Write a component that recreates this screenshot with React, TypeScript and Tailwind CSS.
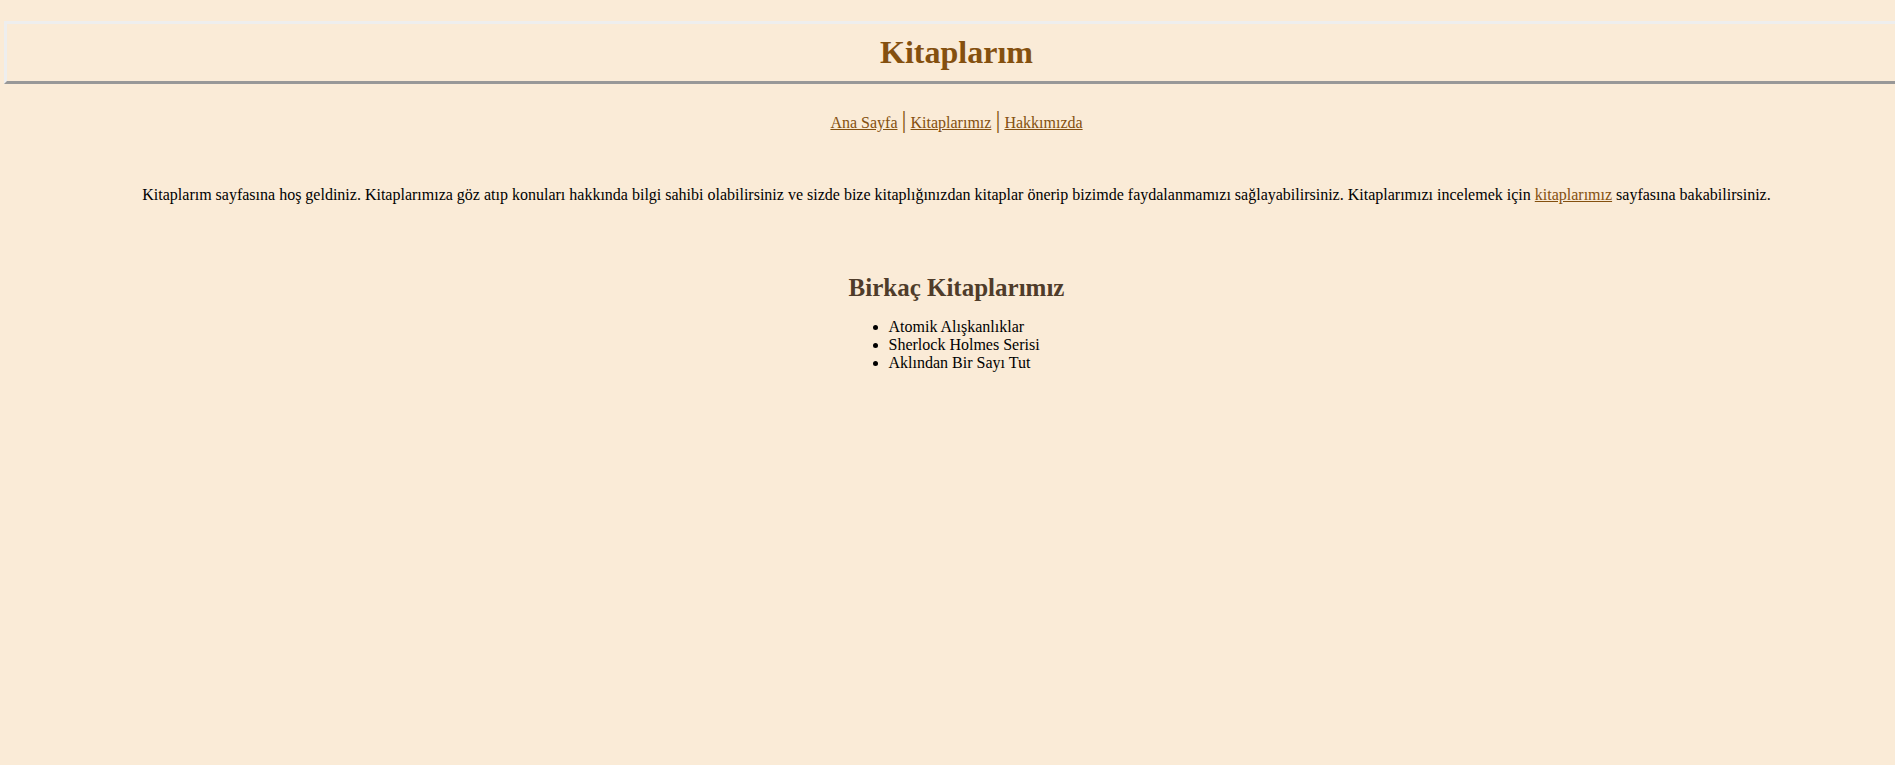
const link = "text-[#84500f] underline";

function Separator() {
  return <span className="text-[25px] leading-7 text-[#84500f]">|</span>;
}

export default function App() {
  return (
    <div className="min-h-screen overflow-x-hidden bg-[#faebd7] pt-[21px] pl-1 font-['Liberation_Serif',serif] text-base leading-[18px] text-black">
      <div className="-mr-[14px]">
        <header className="border-[3px] border-[#eeeeee] border-b-[#989898] py-[10px] text-center">
          <h1 className="text-[32px] leading-[37px] font-bold text-[#84500f]">Kitaplarım</h1>
        </header>
        <nav className="mt-[22px] text-center">
          <a href="#ana" className={link}>Ana Sayfa</a> <Separator />{" "}
          <a href="#kitaplar" className={link}>Kitaplarımız</a> <Separator />{" "}
          <a href="#hakkimizda" className={link}>Hakkımızda</a>
        </nav>
        <main className="flex flex-col items-center">
          <p className="mt-[52px] text-center">
            Kitaplarım sayfasına hoş geldiniz. Kitaplarımıza göz atıp konuları hakkında bilgi sahibi olabilirsiniz ve sizde bize kitaplığınızdan kitaplar önerip bizimde faydalanmamızı sağlayabilirsiniz. Kitaplarımızı incelemek için <a href="#kitaplar" className={link}>kitaplarımız</a> sayfasına bakabilirsiniz.
          </p>
          <section className="mt-[70px]">
            <h2 className="text-[25px] leading-7 font-bold text-[#4f3c2a]">Birkaç Kitaplarımız</h2>
            <ul className="mt-4 list-disc pl-10">
              <li>Atomik Alışkanlıklar</li>
              <li>Sherlock Holmes Serisi</li>
              <li>Aklından Bir Sayı Tut</li>
            </ul>
          </section>
        </main>
      </div>
    </div>
  );
}
